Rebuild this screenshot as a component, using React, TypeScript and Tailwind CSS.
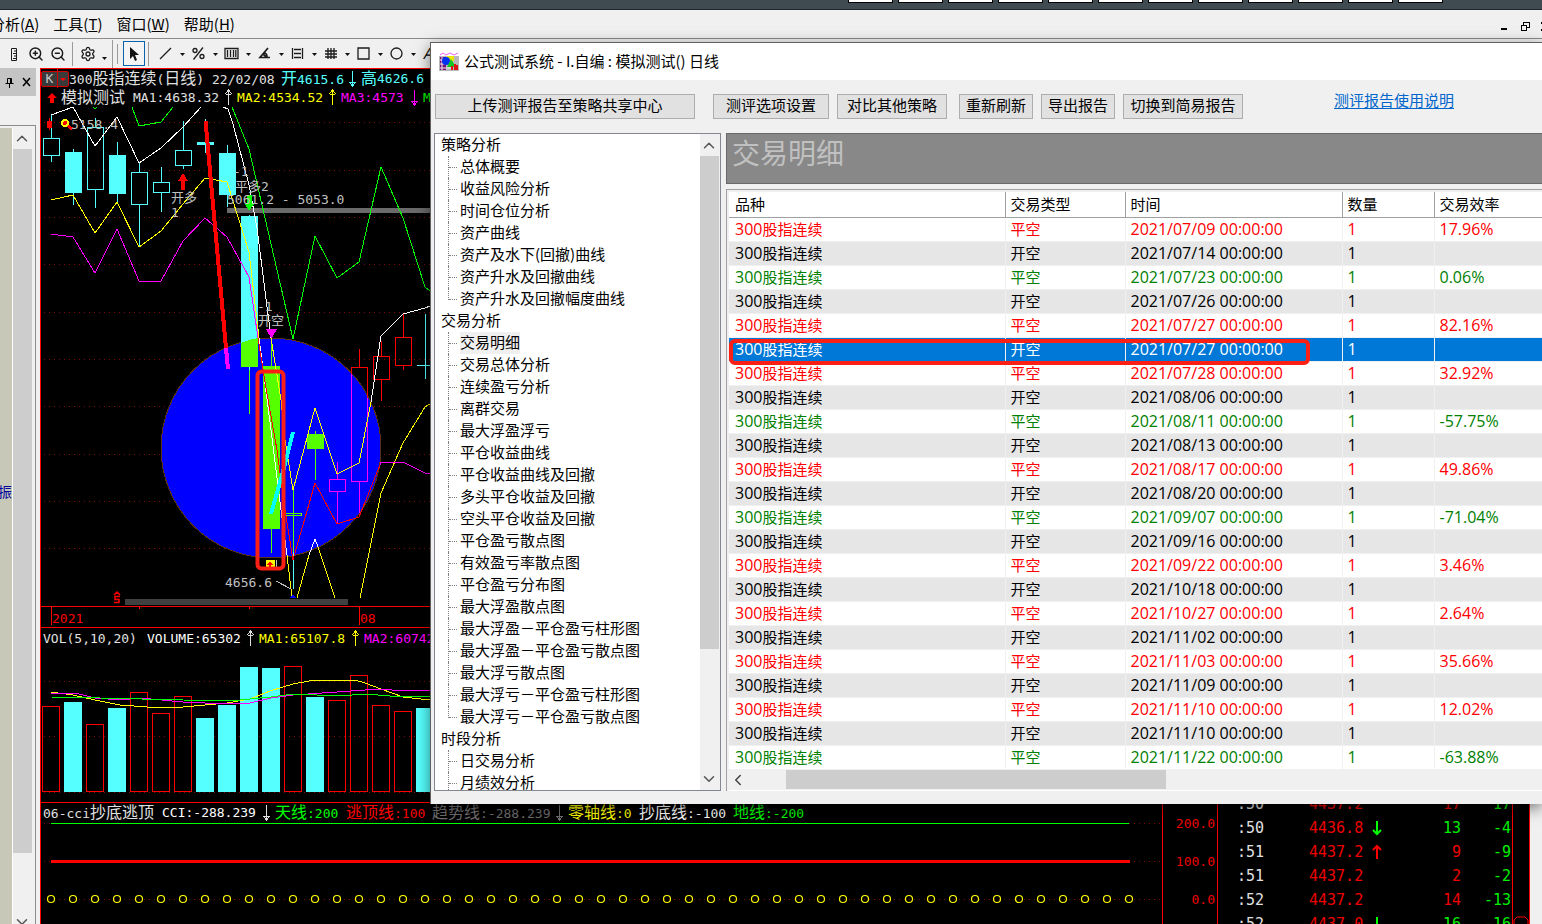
import React from 'react';
import { ChevronDown, ChevronLeft, ChevronUp, Settings, ZoomIn, ZoomOut } from 'lucide-react';

type Candle = {
  top: number;
  bottom: number;
  high: number;
  low: number;
  color: string;
  filled?: boolean;
};

type Trade = [type: string, date: string, rate: string];

const CYAN = '#55ffff';
const LIME = '#55ff00';

const candleX = (index: number) => 51 + index * 22;

const candles: Candle[] = [
  { top: 138, bottom: 155, high: 115, low: 162, color: CYAN },
  { top: 152, bottom: 193, high: 149, low: 205, color: CYAN, filled: true },
  { top: 127, bottom: 189, high: 118, low: 208, color: CYAN },
  { top: 155, bottom: 194, high: 142, low: 202, color: CYAN, filled: true },
  { top: 172, bottom: 204, high: 162, low: 246, color: CYAN },
  { top: 182, bottom: 192, high: 167, low: 212, color: CYAN },
  { top: 150, bottom: 165, high: 121, low: 169, color: CYAN },
  { top: 142, bottom: 145, high: 119, low: 153, color: CYAN, filled: true },
  { top: 153, bottom: 195, high: 145, low: 207, color: CYAN, filled: true },
  { top: 216, bottom: 367, high: 215, low: 414, color: CYAN, filled: true },
  { top: 366, bottom: 529, high: 338, low: 553, color: LIME, filled: true },
  { top: 513, bottom: 515, high: 488, low: 589, color: CYAN },
  { top: 434, bottom: 449, high: 431, low: 480, color: LIME, filled: true },
  { top: 479, bottom: 491, high: 462, low: 524, color: '#ff00ff' },
  { top: 367, bottom: 481, high: 349, low: 513, color: '#ff00ff' },
  { top: 356, bottom: 379, high: 341, low: 401, color: '#ff0000' },
  { top: 337, bottom: 365, high: 314, low: 370, color: '#ff0000' },
  { top: 365, bottom: 366, high: 314, low: 379, color: CYAN, filled: true },
];

const volumes: [top: number, filled: boolean][] = [
  [706, false],
  [702, true],
  [724, false],
  [708, true],
  [692, false],
  [713, false],
  [696, false],
  [718, true],
  [705, true],
  [667, true],
  [668, true],
  [666, false],
  [697, true],
  [700, false],
  [675, false],
  [705, false],
  [711, false],
  [708, true],
];

const priceLines: [color: string, points: string][] = [
  ['#ffffff', '51,115 73,107 95,146 117,117 139,163 161,148 183,127 201,107'],
  ['#ffffff', '223,107 228,109 233,124 249,185 257,228 271,338'],
  ['#ffffff', '371,402 381,336 403,314 425,308 430,306'],
  ['#ffff00', '51,200 73,195 95,233 117,202 139,247 161,231 183,204 205,178 227,182 249,252 259,338'],
  ['#ffffff', '259,338 271,430 281,510 287,555'],
  ['#ffff00', '287,555 292,598'],
  ['#ffff00', '271,338 281,400 285,440 293,490 315,408 337,474 359,463 371,402'],
  ['#ffff00', '297,598 309,555'],
  ['#ffffff', '309,555 315,539 318,547'],
  ['#ffff00', '318,547 335,598'],
  ['#ffff00', '360,598 381,493 403,443 425,407 430,404'],
  ['#ff00ff', '51,234 73,237 95,273 117,229 139,281 161,281 183,241 205,218 227,237 249,277 258,338'],
  ['#ff0000', '258,338 266,388 277,450 285,510 293,560 315,483 337,524 359,517 380,465'],
  ['#ff00ff', '380,465 381,462 403,462 425,473 430,474'],
  ['#00ff00', '132,107 139,126 161,122 173,107'],
  ['#00ff00', '93,107 95,109 97,107'],
  ['#00ff00', '232,107 249,149 293,339 315,236 337,278 359,262 381,167 403,218 425,287 430,291'],
];

const volumeLines: [color: string, points: string][] = [
  ['#ffff00', '51,692 73,695 95,700 120,705 161,708 183,707 227,703 250,699 270,691 293,684 315,680 355,680 365,683 381,689 403,697 430,700'],
  ['#ff00ff', '51,694 75,693 95,698 120,700 140,698 183,702 227,704 250,703 271,698 293,695 337,692 380,689 403,691 430,690'],
  ['#00ff00', '51,697 100,698 183,700 230,701 250,699 271,697 293,694 340,696 365,694 390,696 430,696'],
];

const toolbarCaretIcons = ['line', 'percent', 'bars', 'angle', 'align', 'grid', 'square', 'circle'];

const tree = [
  {
    label: '策略分析',
    items: ['总体概要', '收益风险分析', '时间仓位分析', '资产曲线', '资产及水下(回撤)曲线', '资产升水及回撤曲线', '资产升水及回撤幅度曲线'],
  },
  {
    label: '交易分析',
    items: [
      '交易明细',
      '交易总体分析',
      '连续盈亏分析',
      '离群交易',
      '最大浮盈浮亏',
      '平仓收益曲线',
      '平仓收益曲线及回撤',
      '多头平仓收益及回撤',
      '空头平仓收益及回撤',
      '平仓盈亏散点图',
      '有效盈亏率散点图',
      '平仓盈亏分布图',
      '最大浮盈散点图',
      '最大浮盈－平仓盈亏柱形图',
      '最大浮盈－平仓盈亏散点图',
      '最大浮亏散点图',
      '最大浮亏－平仓盈亏柱形图',
      '最大浮亏－平仓盈亏散点图',
    ],
  },
  { label: '时段分析', items: ['日交易分析', '月绩效分析'] },
];

const trades: Trade[] = [
  ['平空', '2021/07/09', '17.96%'],
  ['开空', '2021/07/14', ''],
  ['平空', '2021/07/23', '0.06%'],
  ['开空', '2021/07/26', ''],
  ['平空', '2021/07/27', '82.16%'],
  ['开空', '2021/07/27', ''],
  ['平空', '2021/07/28', '32.92%'],
  ['开空', '2021/08/06', ''],
  ['平空', '2021/08/11', '-57.75%'],
  ['开空', '2021/08/13', ''],
  ['平空', '2021/08/17', '49.86%'],
  ['开空', '2021/08/20', ''],
  ['平空', '2021/09/07', '-71.04%'],
  ['开空', '2021/09/16', ''],
  ['平空', '2021/09/22', '3.46%'],
  ['开空', '2021/10/18', ''],
  ['平空', '2021/10/27', '2.64%'],
  ['开空', '2021/11/02', ''],
  ['平空', '2021/11/03', '35.66%'],
  ['开空', '2021/11/09', ''],
  ['平空', '2021/11/10', '12.02%'],
  ['开空', '2021/11/10', ''],
  ['平空', '2021/11/22', '-63.88%'],
];

const SELECTED_TRADE = 5;

const ticks = [
  { time: ':50', price: '4437.2', dir: '', volume: '17', delta: '17' },
  { time: ':50', price: '4436.8', dir: 'down', volume: '13', delta: '-4' },
  { time: ':51', price: '4437.2', dir: 'up', volume: '9', delta: '-9' },
  { time: ':51', price: '4437.2', dir: '', volume: '2', delta: '-2' },
  { time: ':52', price: '4437.2', dir: '', volume: '14', delta: '-13' },
  { time: ':52', price: '4437.0', dir: 'down', volume: '16', delta: '-16' },
];

// Chinese runs are set larger than the monospaced digits beside them
const Mixed = ({ text }: { text: string }) => (
  <>
    {text.split(/([\u4e00-\u9fff]+)/).map((part, i) =>
      i % 2 ? (
        <span key={i} className="text-[16px]">
          {part}
        </span>
      ) : (
        part
      )
    )}
  </>
);

const Arrow = ({ up }: { up?: boolean }) => (
  <svg className="w-4 h-[18px] shrink-0" viewBox="0 0 16 18" fill="none" stroke="currentColor" shapeRendering="crispEdges">
    <path d={up ? 'M7.500 16V1M4 5l3.500-4 3.500 4M5 5h5' : 'M7.500 1v15M4 12l3.500 4 3.500-4M5 12h5'} />
  </svg>
);

const Caret = () => (
  <svg className="w-4 h-3 shrink-0" viewBox="0 0 16 12">
    <path d="M6 5h5L8.500 8z" fill="#111" />
  </svg>
);

const ToolIcon = ({ name }: { name: string }) => (
  <svg className="w-[17px] h-[17px] shrink-0" viewBox="0 0 17 17" fill="none" stroke="#1c1c1c" strokeWidth="1.3">
    {name === 'line' && <path d="M3 14L14 3" />}
    {name === 'percent' && (
      <>
        <path d="M3.500 14.500L13 2.500" />
        <circle cx="5" cy="5.500" r="2" />
        <circle cx="12" cy="11.500" r="2" />
      </>
    )}
    {name === 'bars' && <path d="M2 3.500h13v10H2zM4.500 5v7M7.500 5v7M10.500 5v7M12.800 5v7" />}
    {name === 'angle' && <path d="M12 3L4 12.500h10M8 8c2 0 3 2 3 4M7 9l4 3.500" strokeWidth="1.700" />}
    {name === 'align' && <path d="M3.500 3v11M13.500 3v11M5 4.500h7M5 8.500h7M5 12.500h7" />}
    {name === 'grid' && <path d="M6 3v11M9 3v11M12 3v11M3 6h12M3 9h12M3 12h12" />}
    {name === 'square' && <path d="M3 3h11v11H3z" />}
    {name === 'circle' && <circle cx="8.500" cy="8.500" r="5.500" />}
  </svg>
);

const Guides = ({ ys, to }: { ys: number[]; to: number }) => (
  <>
    {ys.map((y) => (
      <line key={y} x1="44" x2={to} y1={y + 0.5} y2={y + 0.5} stroke="#780c0c" strokeDasharray="1 4" />
    ))}
  </>
);

const PriceChart = () => (
  <svg
    className="block w-[389px] h-[521px] shrink-0 font-['DejaVu_Sans_Mono','Noto_Sans_CJK_SC',monospace] text-[13px]"
    viewBox="41 107 389 521"
    fill="none"
    shapeRendering="crispEdges"
  >
    <Guides ys={[122, 170, 217, 264, 312, 359, 406, 454, 501, 548]} to={430} />
    <circle cx="271" cy="448" r="110" fill="#0000ff" stroke="#5b3018" />

    {candles.map(({ top, bottom, high, low, color, filled }, i) => (
      <g key={i} stroke={color}>
        <path d={`M${candleX(i) + 0.5} ${high}V${top}M${candleX(i) + 0.5} ${bottom}V${low}`} />
        {filled ? (
          <rect x={candleX(i) - 8} y={top} width="17" height={bottom - top} fill={color} stroke="none" />
        ) : (
          <rect x={candleX(i) - 7.5} y={top + 0.5} width="16" height={bottom - top} />
        )}
      </g>
    ))}
    <path d="M241 343l8-3 9-2v29h-17z" fill={LIME} />
    <path d="M249.500 370v44M293.500 488v64M285.500 513.500h16v2h-16z" stroke={LIME} />
    <path d="M351.500 374v-6.500h16V398M359.500 349v18" stroke="#ff0000" />

    <path d="M227 208h203v5H227z" fill="#6a6a6a" />
    {priceLines.map(([color, points], i) => (
      <polyline key={i} points={points} stroke={color} />
    ))}
    <path d="M205.500 121L226 348" stroke="#ff0000" strokeWidth="4" />
    <path d="M226 348l2 21" stroke="#ff00ff" strokeWidth="4" />
    <path d="M293 432l-9 36-13 46" stroke="#00ffff" strokeWidth="4" />

    {/* trade markers */}
    <path d="M183 173l5 8h-3v9h-4v-9h-3z" fill="#ff0000" />
    <path d="M249 211l-4-7h2v-9h5v9h2z" fill="#00ff00" />
    <path d="M266 329h11l-5 9h-1z" fill="#ff00ff" />
    <path d="M47 121h5v7h-5zM49 118h1v12h-1z" fill="#ff0000" />
    <path d="M67 125l5 4" stroke="#ff0000" strokeWidth="3" />
    <circle cx="65" cy="123" r="3" fill="#ff0000" stroke="#ffff00" strokeWidth="2" />
    <path d="M266 560h9v10h-9z" fill="#ffff00" />
    <path d="M270 561l3 4h-2v4h-2v-4h-2z" fill="#ff0000" />
    <path d="M293 594l3 4h-6z" fill="#0000ff" />
    <path d="M276 581l15 8M276.500 560v8" stroke="#c0c0c0" />

    <g fill="#c0c0c0">
      <text x="71" y="129">5158.4</text>
      <text x="171" y="202">开多</text>
      <text x="171" y="217">1</text>
      <text x="233" y="176">-1</text>
      <text x="235" y="191">平多2</text>
      <text x="227" y="204">5061.2 - 5053.0</text>
      <text x="257" y="311">-1</text>
      <text x="258" y="325">开空</text>
      <text x="225" y="587">4656.6</text>
    </g>

    <rect x="257.500" y="371.500" width="26" height="197" rx="4" stroke="#fb2015" strokeWidth="4" shapeRendering="auto" />

    <path d="M125 599h223v6H125z" fill="#404040" />
    <path d="M41 606.500h389M41 627.500h389M51.500 607v18M359.500 607v18M139.500 607v2M249.500 607v2" stroke="#ff0000" />
    <path
      d="M114 595l3-3 3 3M120 596.500h-5v3h4v3h-5"
      stroke="#ff0000"
      strokeWidth="1.500"
      shapeRendering="auto"
    />
    <g fill="#ff0000">
      <text x="52" y="623">2021</text>
      <text x="360" y="623">08</text>
    </g>
  </svg>
);

const VolumeChart = () => (
  <svg className="block w-[389px] h-[152px] shrink-0" viewBox="41 650 389 152" fill="none" shapeRendering="crispEdges">
    <Guides ys={[681, 736, 792]} to={430} />
    {volumes.map(([top, filled], i) =>
      filled ? (
        <rect key={i} x={candleX(i) - 9} y={top} width="18" height={792 - top} fill={CYAN} />
      ) : (
        <rect key={i} x={candleX(i) - 8.5} y={top + 0.5} width="17" height={791 - top} stroke="#ff0000" />
      )
    )}
    {volumeLines.map(([color, points]) => (
      <polyline key={color} points={points} stroke={color} />
    ))}
  </svg>
);

const CciChart = () => (
  <svg className="block w-[1122px] h-[101px] shrink-0" viewBox="41 823 1122 101" fill="none">
    <g shapeRendering="crispEdges">
      <Guides ys={[823, 861, 899]} to={1163} />
      <path d="M51 823.500h1078" stroke="#00ff00" />
      <path d="M51 861.500h1079" stroke="#ff0000" strokeWidth="3" />
    </g>
    {Array.from({ length: 50 }, (_, i) => (
      <circle key={i} cx={51 + i * 22} cy="899" r="3.500" stroke="#ffff00" strokeWidth="1.200" />
    ))}
  </svg>
);

const MenuBar = () => (
  <nav className="flex items-center h-7 bg-[#f0f0f0] text-[15px] text-black">
    <div className="flex gap-[14px] -ml-[10px]">
      {[
        ['分析', 'A'],
        ['工具', 'T'],
        ['窗口', 'W'],
        ['帮助', 'H'],
      ].map(([label, key]) => (
        <button key={key} className="whitespace-nowrap">
          {label}(<span className="underline">{key}</span>)
        </button>
      ))}
    </div>
    <svg className="ml-auto w-[44px] h-4" viewBox="0 0 44 16" fill="none" stroke="#000" shapeRendering="crispEdges">
      <path d="M3 13h6" strokeWidth="2" />
      <path d="M23.500 9.500h5v5h-5zM23 9h6M25.500 9V6.500h6v5H29M25 6.500h7" />
      <path d="M43 6v2M43 13v2" />
    </svg>
  </nav>
);

const Toolbar = () => (
  <div className="flex items-center h-[30px] border-t border-[#8a8a8a] bg-[#f0f0f0] overflow-hidden">
    <svg className="w-4 h-4 ml-[6px] shrink-0" viewBox="0 0 16 16" fill="none" stroke="#1c1c1c">
      <path d="M5.500 2.500h5v12h-5zM8 5h2M7 7.500h3M8 10h2M7 12.500h3" />
    </svg>
    <ZoomIn className="ml-[6px] shrink-0" size={16} strokeWidth={2.2} color="#1c1c1c" />
    <ZoomOut className="ml-[6px] shrink-0" size={16} strokeWidth={2.2} color="#1c1c1c" />
    <div className="w-px h-6 ml-[6px] bg-[#9a9a9a] shrink-0" />
    <Settings className="ml-[7px] shrink-0" size={16} strokeWidth={2} color="#1c1c1c" />
    <div className="pt-2">
      <Caret />
    </div>
    <div className="w-px h-7 bg-[#9a9a9a] shrink-0" />
    <div className="w-px h-5 ml-1 bg-[#9a9a9a] shrink-0" />
    <button aria-label="选择" className="flex items-center justify-center w-[22px] h-[25px] ml-[5px] border border-[#0a64ad] bg-[#f4f4f4] shrink-0">
      <svg className="w-4 h-4" viewBox="0 0 16 16">
        <path d="M4 1v12l3-3 2 5 2-1-2-5h4z" fill="#111" />
      </svg>
    </button>
    <div className="w-px h-6 ml-[3px] mr-2 bg-[#9a9a9a] shrink-0" />
    {toolbarCaretIcons.map((name) => (
      <button key={name} aria-label={name} className="flex items-center shrink-0">
        <ToolIcon name={name} />
        <Caret />
      </button>
    ))}
    <span className="pl-[2px] text-[15px] italic">A</span>
  </div>
);

const SidePanel = () => (
  <aside className="flex flex-col w-10 shrink-0 bg-[#f0f0f0]">
    <div className="flex items-center gap-[6px] h-7 w-9 pl-1 bg-[#c4c4c4]">
      <svg className="w-[11px] h-3" viewBox="0 0 11 12" fill="none" stroke="#000">
        <path d="M3.500 7V2.500h4V7M1.500 7.500h8M5.500 8v4M6.500 3v4" />
      </svg>
      <svg className="w-[11px] h-3" viewBox="0 0 11 12" stroke="#000" strokeWidth="1.500">
        <path d="M2 2l7 8M9 2l-7 8" />
      </svg>
    </div>
    <div className="flex flex-1 w-9 mt-[29px] pt-[2px] border-t border-r border-[#8c8c8c]">
      <div className="w-3 pt-[353px] bg-[#c8c8b8] overflow-hidden">
        <div className="flex justify-end text-[14px] leading-5 text-[#0000a0] whitespace-nowrap">主振</div>
      </div>
      <div className="flex flex-col w-5 bg-[#f0f0f0] border-l border-white">
        <ChevronUp className="h-[21px] shrink-0" size={18} color="#555" />
        <div className="h-[704px] bg-[#cdcdcd]" />
        <ChevronDown className="mt-auto -mb-[7px] shrink-0" size={18} color="#555" />
      </div>
    </div>
  </aside>
);

const ChartColumn = () => (
  <section className="flex-1 min-w-0 overflow-hidden border-l border-t border-[#ff0000] bg-black font-['DejaVu_Sans_Mono','Noto_Sans_CJK_SC',monospace] text-[13px] text-[#e0e0e0] whitespace-nowrap">
    <div className="h-[38px]">
      <div className="flex items-center h-[19px] leading-[19px]">
        <div className="flex items-center w-7 h-4 border border-[#d00000] rounded-xs bg-[#3a3a3a] text-[#c8c8c8]">
          <span className="w-4 text-center border-r border-[#d00000]">K</span>
          <svg className="w-2 h-2 ml-px" viewBox="0 0 8 8">
            <path d="M1 3h6L4 6z" fill="#ff0000" />
          </svg>
        </div>
        <div className="w-[212px]">
          <Mixed text="300股指连续(日线) 22/02/08" />
        </div>
        <div className="flex items-center text-[#55ffff]">
          <div className="w-16">
            <Mixed text="开4615.6" />
          </div>
          <Arrow />
          <Mixed text="高4626.6" />
        </div>
      </div>
      <div className="flex items-center h-[19px] leading-[19px]">
        <svg className="w-5 h-4" viewBox="0 0 20 16">
          <path d="M11 3l5 5h-3v5h-4V8H6z" fill="#ff0000" />
        </svg>
        <div className="w-[72px]">
          <Mixed text="模拟测试" />
        </div>
        <div className="w-[88px]">MA1:4638.32</div>
        <Arrow up />
        <div className="flex items-center text-[#ffff00]">
          <div className="w-[88px]">MA2:4534.52</div>
          <Arrow up />
        </div>
        <div className="flex items-center text-[#ff00ff]">
          <div className="w-[66px]">MA3:4573</div>
          <Arrow />
        </div>
        <span className="text-[#00ff00]">MA4</span>
      </div>
    </div>
    <PriceChart />
    <div className="flex items-center h-[22px] pl-[2px]">
      <div className="w-[104px]">VOL(5,10,20)</div>
      <div className="w-24 text-white">VOLUME:65302</div>
      <Arrow up />
      <div className="flex items-center text-[#ffff00]">
        <div className="w-[89px]">MA1:65107.8</div>
        <Arrow up />
      </div>
      <span className="text-[#ff00ff]">MA2:60742</span>
    </div>
    <VolumeChart />
    <div className="flex border-t border-[#ff0000]">
      <div className="flex-1 min-w-0 overflow-hidden">
        <div className="flex items-center h-5 pl-[2px] leading-5">
          <div className="w-[119px]">
            <Mixed text="06-cci抄底逃顶" />
          </div>
          <div className="w-[97px] text-white">CCI:-288.239</div>
          <Arrow />
          <div className="w-[71px] text-[#00ff00]">
            <Mixed text="天线:200" />
          </div>
          <div className="w-[86px] text-[#ff0000]">
            <Mixed text="逃顶线:100" />
          </div>
          <div className="flex items-center text-[#707070]">
            <div className="w-[120px]">
              <Mixed text="趋势线:-288.239" />
            </div>
            <Arrow />
          </div>
          <div className="w-[71px] text-[#ffff00]">
            <Mixed text="零轴线:0" />
          </div>
          <div className="w-[94px] text-white">
            <Mixed text="抄底线:-100" />
          </div>
          <div className="text-[#00ff00]">
            <Mixed text="地线:-200" />
          </div>
        </div>
        <CciChart />
      </div>
      <div className="w-[55px] pt-[11px] pr-[2px] border-l border-[#ff0000] text-right leading-[20px] text-[#f00000]">
        <div className="mb-[18px]">200.0</div>
        <div className="mb-[18px]">100.0</div>
        <div>0.0</div>
      </div>
    </div>
  </section>
);

const TickPanel = () => (
  <section className="flex w-[325px] shrink-0 bg-black border-l border-t border-[#ff0000] font-['DejaVu_Sans_Mono',monospace] text-[15px]">
    <div className="w-[295px] shrink-0 pt-[723px] pl-[19px] border-r border-[#ff0000]">
      {ticks.map(({ time, price, dir, volume, delta }, i) => (
        <div key={i} className="flex items-center h-6 leading-6">
          <span className="w-[72px] text-[#e0e0e0]">{time}</span>
          <span className="w-[60px] text-[#f00000]">{price}</span>
          <svg className="w-4 h-4" viewBox="0 0 16 16" fill="none" strokeWidth="2">
            {dir === 'up' && <path d="M8 15V2M4 6l4-4 4 4" stroke="#ff0000" />}
            {dir === 'down' && <path d="M8 1v13M4 10l4 4 4-4" stroke="#00ff00" />}
          </svg>
          <span className={`w-[76px] text-right ${delta === '-4' || i === 5 ? 'text-[#00f000]' : 'text-[#f00000]'}`}>{volume}</span>
          <span className="w-[50px] text-right text-[#00f000]">{delta}</span>
        </div>
      ))}
    </div>
    <div className="flex flex-col justify-end w-[17px] border-r border-[#ff0000]">
      <svg className="w-4 h-2" viewBox="0 0 16 8" fill="none" stroke="#ff0000">
        <path d="M1 8V4l3-3h8l3 3v4" />
      </svg>
    </div>
    <div className="flex-1 bg-[#f0f0f0]" />
  </section>
);

const ReportTree = () => (
  <div className="flex justify-between w-[287px] h-[658px] shrink-0 overflow-hidden border border-[#828790] bg-white">
    <ul className="pl-[6px] text-[15px] leading-[20px] whitespace-nowrap">
      {tree.map(({ label, items }) => (
        <li key={label}>
          <button className="block h-[22px] pb-[2px]">{label}</button>
          <ul className="pl-[7px]">
            {items.map((item, i) => (
              <li key={item} className="flex h-[22px]">
                <div className={`w-px border-l border-dotted border-[#808080] ${i === items.length - 1 && label !== '时段分析' ? 'h-3' : 'h-[22px]'}`} />
                <div className="w-2 h-3 mr-[3px] border-b border-dotted border-[#808080]" />
                <button className={item === '交易明细' ? 'h-[22px] pb-[2px] bg-[#f0f0f0]' : 'h-[22px] pb-[2px]'}>{item}</button>
              </li>
            ))}
          </ul>
        </li>
      ))}
    </ul>
    <div className="flex flex-col w-5 pr-px pt-px bg-[#f0f0f0]">
      <ChevronUp className="h-[21px] shrink-0" size={18} color="#555" />
      <div className="h-[493px] shrink-0 bg-[#cdcdcd]" />
      <ChevronDown className="mt-auto mb-[2px] shrink-0" size={18} color="#555" />
    </div>
  </div>
);

const tradeColor = ([type, , rate]: Trade) => {
  if (type === '开空') return 'text-black';
  return rate.startsWith('-') || rate === '0.06%' ? 'text-[#008000]' : 'text-[#ff0000]';
};

const TradeTable = () => (
  <div className="relative pt-[2px] pl-[2px] border-l border-t border-[#a0a0a0] bg-[#f0f0f0]">
    <table className="w-full table-fixed border-collapse bg-white font-['Open_Sans','Noto_Sans_CJK_SC',sans-serif] text-[16px] leading-[23px] text-left whitespace-nowrap">
      <colgroup>
        <col className="w-[276px]" />
        <col className="w-[120px]" />
        <col className="w-[217px]" />
        <col className="w-[92px]" />
        <col />
      </colgroup>
      <thead>
        <tr className="h-[25px] border-b border-[#a0a0a0] text-[15px]">
          {['品种', '交易类型', '时间', '数量', '交易效率'].map((title) => (
            <th key={title} className="pl-[5px] first:pl-[6px] py-0 font-normal border-r border-[#a0a0a0] last:border-r-0">
              {title}
            </th>
          ))}
        </tr>
      </thead>
      <tbody>
        {trades.map((trade, i) => {
          const [type, date, rate] = trade;
          const selected = i === SELECTED_TRADE;
          const tone = selected ? 'bg-[#0078d7] text-white' : `${i % 2 ? 'bg-[#e6e6e6]' : 'bg-white'} ${tradeColor(trade)}`;
          return (
            <tr key={i} className={`h-6 border-b border-[#f0f0f0] ${tone}`}>
              <td className="pl-[6px] py-0 border-r border-[#f0f0f0]">
                300<span className="text-[15px]">股指连续</span>
              </td>
              <td className="pl-[5px] py-0 border-r border-[#f0f0f0] text-[15px]">{type}</td>
              <td className="pl-[5px] py-0 border-r border-[#f0f0f0]">{date} 00:00:00</td>
              <td className="pl-[5px] py-0 border-r border-[#f0f0f0]">1</td>
              <td className="pl-[5px] py-0">{rate}</td>
            </tr>
          );
        })}
      </tbody>
    </table>
    <div className="absolute left-[2px] top-[149px] w-[581px] h-[26px] border-4 border-[#fb2015] rounded-md" />
    <div className="flex items-center h-[21px] border-b border-white">
      <ChevronLeft className="shrink-0" size={18} color="#444" />
      <div className="w-[380px] h-[19px] ml-[39px] bg-[#cdcdcd]" />
    </div>
  </div>
);

const ReportDialog = () => (
  <div className="absolute left-[430px] right-0 top-[42px] h-[762px] overflow-hidden border-l border-t border-[#606060] bg-[#f0f0f0] shadow-[0_4px_14px_rgba(0,0,0,0.5)]">
    <header className="flex items-center gap-[5px] h-[37px] pl-2 bg-white text-[15px]">
      <svg className="w-5 h-5" viewBox="0 0 20 20">
        <path d="M0 4h20v15H0z" fill="#b9b9b9" />
        <path d="M1 5h6v13H1z" fill="#7a1078" />
        <path d="M1 8h6M1 12h6M1 16h12M3 5v13" stroke="#eee" />
        <path d="M8 4h7v5H8z" fill="#e8e800" />
        <circle cx="7" cy="9" r="4" fill="#0030f0" />
        <path d="M12 7l5 8H8z" fill="#10c820" />
        <path d="M13 14v4M16 12v6M18 13v5" stroke="#e01010" strokeWidth="2" />
        <path d="M1 3l3-2 3 2 4-2 4 2 4-2" fill="none" stroke="#f060f0" />
      </svg>
      <h1>公式测试系统 - I.自编 : 模拟测试() 日线</h1>
    </header>
    <div className="flex items-start h-[53px] pl-1 pt-[14px] text-[15px] leading-[20px] whitespace-nowrap">
      <button className="w-[260px] h-[25px] mr-[18px] pb-[3px] border border-[#adadad] bg-[#e1e1e1]">上传测评报告至策略共享中心</button>
      <button className="w-[116px] h-[25px] mr-2 pb-[3px] border border-[#adadad] bg-[#e1e1e1]">测评选项设置</button>
      <button className="w-[110px] h-[25px] mr-3 pb-[3px] border border-[#adadad] bg-[#e1e1e1]">对比其他策略</button>
      <button className="w-[74px] h-[25px] mr-2 pb-[3px] border border-[#adadad] bg-[#e1e1e1]">重新刷新</button>
      <button className="w-[74px] h-[25px] mr-2 pb-[3px] border border-[#adadad] bg-[#e1e1e1]">导出报告</button>
      <button className="w-[120px] h-[25px] mr-[91px] pb-[3px] border border-[#adadad] bg-[#e1e1e1]">切换到简易报告</button>
      <a href="#guide" className="-mt-1 text-[#0066cc] underline underline-offset-2">
        测评报告使用说明
      </a>
    </div>
    <div className="flex gap-[5px] pl-[3px]">
      <ReportTree />
      <div className="flex-1 min-w-0">
        <h2 className="h-[51px] mb-[5px] pl-[5px] border border-r-0 border-[#696969] bg-[#888888] text-[28px] leading-9 text-[#c0c0c0]">交易明细</h2>
        <TradeTable />
      </div>
    </div>
  </div>
);

const App: React.FC = () => {
  return (
    <div className="relative flex flex-col h-screen overflow-hidden bg-[#f0f0f0] font-['Noto_Sans_CJK_SC',sans-serif] text-black">
      <div className="flex justify-end gap-[5px] h-[10px] shrink-0 pr-[99px] border-b border-[#20282c] bg-[#3f4b50]">
        {Array.from({ length: 12 }, (_, i) => (
          <div key={i} className="w-[45px] h-[3px] border border-t-0 border-black bg-white" />
        ))}
      </div>
      <MenuBar />
      <Toolbar />
      <main className="flex flex-1 min-h-0">
        <SidePanel />
        <ChartColumn />
        <TickPanel />
      </main>
      <ReportDialog />
    </div>
  );
};

export default App;
